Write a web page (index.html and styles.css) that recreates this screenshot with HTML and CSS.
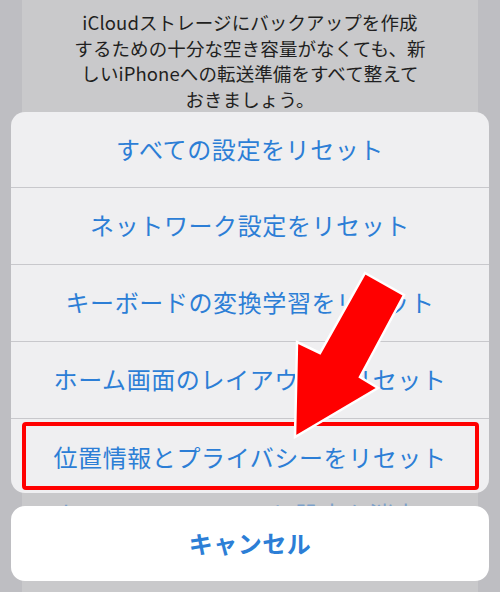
FILE: index.html
```html
<!DOCTYPE html>
<html lang="ja">
<head>
<meta charset="utf-8">
<link rel="stylesheet" href="styles.css">
</head>
<body>
<div class="screen">
  <div class="dialog">
    <p class="dialog-text">iCloudストレージにバックアップを作成<br>するための十分な空き容量がなくても、新<br>しいiPhoneへの転送準備をすべて整えて<br>おきましょう。</p>
  </div>
  <div class="sheet-area">
    <div class="sheet">
      <div class="row">すべての設定をリセット</div>
      <div class="row">ネットワーク設定をリセット</div>
      <div class="row">キーボードの変換学習をリセット</div>
      <div class="row">ホーム画面のレイアウトをリセット</div>
      <div class="row last">位置情報とプライバシーをリセット</div>
      <div class="highlight"></div>
    </div>
    <div class="peek"><span class="peek-text">すべてのコンテンツと設定を消去</span></div>
    <div class="cancel">キャンセル</div>
  </div>
  <svg class="arrow" width="500" height="592" viewBox="0 0 500 592">
    <polygon points="365,273 404,295 360,377 378,388 295,437 297,342 320,353" fill="#ff0000" stroke="#ffffff" stroke-width="2.5" stroke-linejoin="miter"/>
  </svg>
</div>
</body>
</html>
```

FILE: styles.css
```css
* { box-sizing: border-box; }
html, body { margin: 0; padding: 0; }
body {
  width: 500px;
  height: 592px;
  overflow: hidden;
  background: #bebec2;
  font-family: "Noto Sans CJK JP", "Noto Sans", sans-serif;
}
.screen {
  position: relative;
  display: grid;
  grid-template-columns: 1fr;
  grid-template-rows: 592px;
  width: 500px;
  height: 592px;
}
.dialog {
  grid-area: 1 / 1;
  margin: 0 22px;
  background: #c9c9cb;
}
.dialog-text {
  margin: 0;
  padding-top: 10px;
  text-align: center;
  font-size: 18.5px;
  line-height: 25.5px;
  color: #1f1f21;
  letter-spacing: 0.1px;
}
.sheet-area {
  grid-area: 1 / 1;
  display: flex;
  flex-direction: column;
  padding: 112px 11px 0;
}
.sheet {
  position: relative;
  height: 381px;
  background: #efeff1;
  border-radius: 14px;
  overflow: hidden;
}
.row {
  height: 77px;
  display: flex;
  align-items: center;
  justify-content: center;
  padding-bottom: 3px;
  border-bottom: 1px solid #c8c8cc;
  color: #2c7ed6;
  font-size: 24px;
  letter-spacing: 0.6px;
}
.row:first-child { height: 76px; }
.row.last { border-bottom: none; }
.highlight {
  position: absolute;
  left: 11px;
  top: 310px;
  width: 457px;
  height: 68px;
  border: 4px solid #ff0000;
  border-radius: 4px;
}
.peek {
  height: 13px;
  margin: 0 11px;
  overflow: hidden;
  padding-left: 30px;
}
.peek-text {
  display: block;
  margin-top: 9px;
  font-size: 24px;
  line-height: 24px;
  color: #4a86c8;
  opacity: 0.6;
  letter-spacing: 0.6px;
  white-space: nowrap;
}
.cancel {
  height: 75px;
  background: #ffffff;
  border-radius: 14px;
  display: flex;
  align-items: center;
  justify-content: center;
  padding-bottom: 2px;
  color: #2c7ed6;
  font-size: 24px;
  font-weight: 700;
  letter-spacing: 0.5px;
}
.arrow {
  position: absolute;
  left: 0;
  top: 0;
  pointer-events: none;
}
```
